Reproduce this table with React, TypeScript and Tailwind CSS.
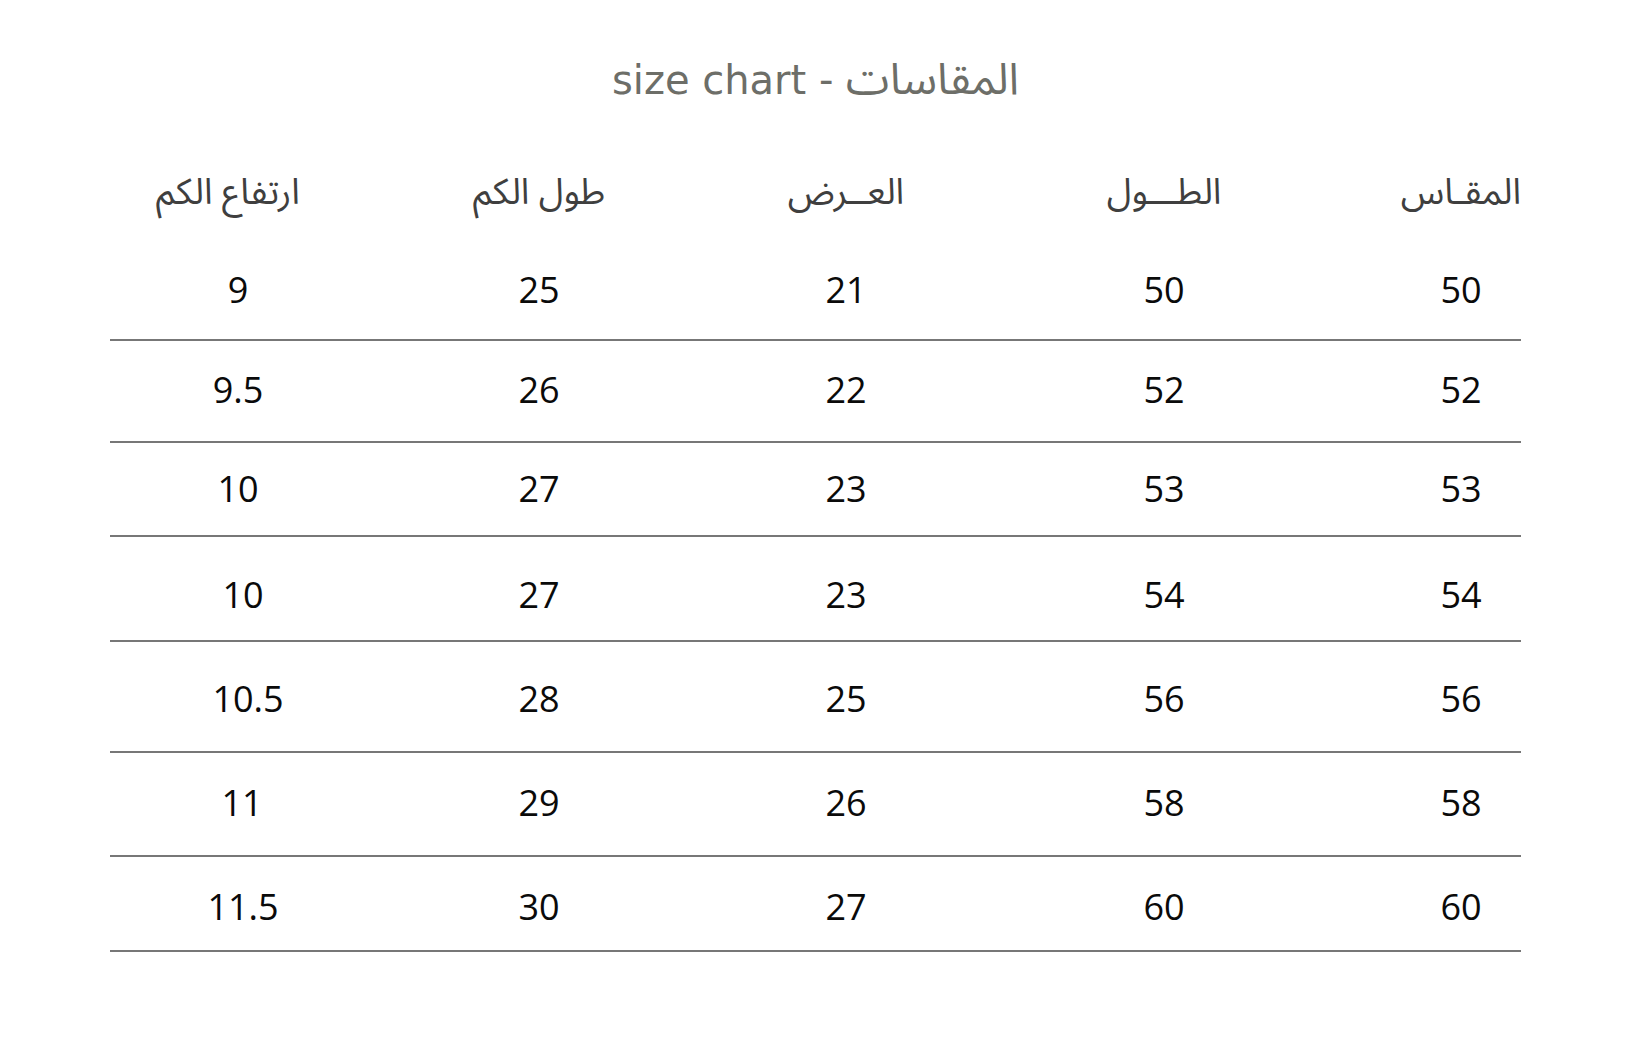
import React from "react";

const headers = ["ارتفاع الكم", "طول الكم", "العــرض", "الطـــول", "المقـاس"];

const rows: { vals: string[]; h: string; pt: string; c1: string }[] = [
  { vals: ["9", "25", "21", "50", "50"], h: "h-[100px]", pt: "pb-[2px]", c1: "pl-0" },
  { vals: ["9.5", "26", "22", "52", "52"], h: "h-[102px]", pt: "pb-[4px]", c1: "pl-0" },
  { vals: ["10", "27", "23", "53", "53"], h: "h-[94px]", pt: "pb-[2px]", c1: "pl-0" },
  { vals: ["10", "27", "23", "54", "54"], h: "h-[105px]", pt: "pt-[12px]", c1: "pl-[10px]" },
  { vals: ["10.5", "28", "25", "56", "56"], h: "h-[111px]", pt: "pt-[4px]", c1: "pl-[20px]" },
  { vals: ["11", "29", "26", "58", "58"], h: "h-[104px]", pt: "pb-[4px]", c1: "pl-[8px]" },
  { vals: ["11.5", "30", "27", "60", "60"], h: "h-[95px]", pt: "pt-[5px]", c1: "pl-[10px]" },
];

const grid = "grid grid-cols-[256px_346px_268px_368px_173px]";

export default function App() {
  return (
    <div className="min-h-[1052px] w-full bg-white font-['Open_Sans','DejaVu_Sans',sans-serif]">
      <div className="ml-[110px] w-[1411px] pt-[52px]">
        <h1 className="text-center font-['DejaVu_Sans',sans-serif] text-[40px] leading-[56px] font-normal text-[#6d6e68]">
          size chart -{" "}
          <span dir="rtl" className="font-['Noto_Sans_Arabic','DejaVu_Sans',sans-serif] font-stretch-condensed text-[44px]">
            المقاسات
          </span>
        </h1>
        <div className={`${grid} mt-[43px] h-[90px] items-center pb-[6px] font-['Noto_Sans_Arabic','DejaVu_Sans',sans-serif] font-stretch-condensed text-[36px] leading-[40px] text-[#3f3f3f]`}>
          {headers.map((h, i) => (
            <div
              key={i}
              dir="rtl"
              className={`text-center ${i === 0 ? "pr-[20px]" : ""} ${i === 4 ? "pl-[53px]" : ""}`}
            >
              {h}
            </div>
          ))}
        </div>
        {rows.map((r, ri) => (
          <div
            key={ri}
            className={`${grid} ${r.h} ${r.pt} items-center border-b-2 border-[#777777] text-[36px] leading-[49px] text-[#0a0a0a]`}
          >
            {r.vals.map((v, i) => (
              <div
                key={i}
                className={`text-center ${i === 0 ? r.c1 : ""} ${i === 4 ? "pl-[53px]" : ""}`}
              >
                {v}
              </div>
            ))}
          </div>
        ))}
      </div>
    </div>
  );
}
